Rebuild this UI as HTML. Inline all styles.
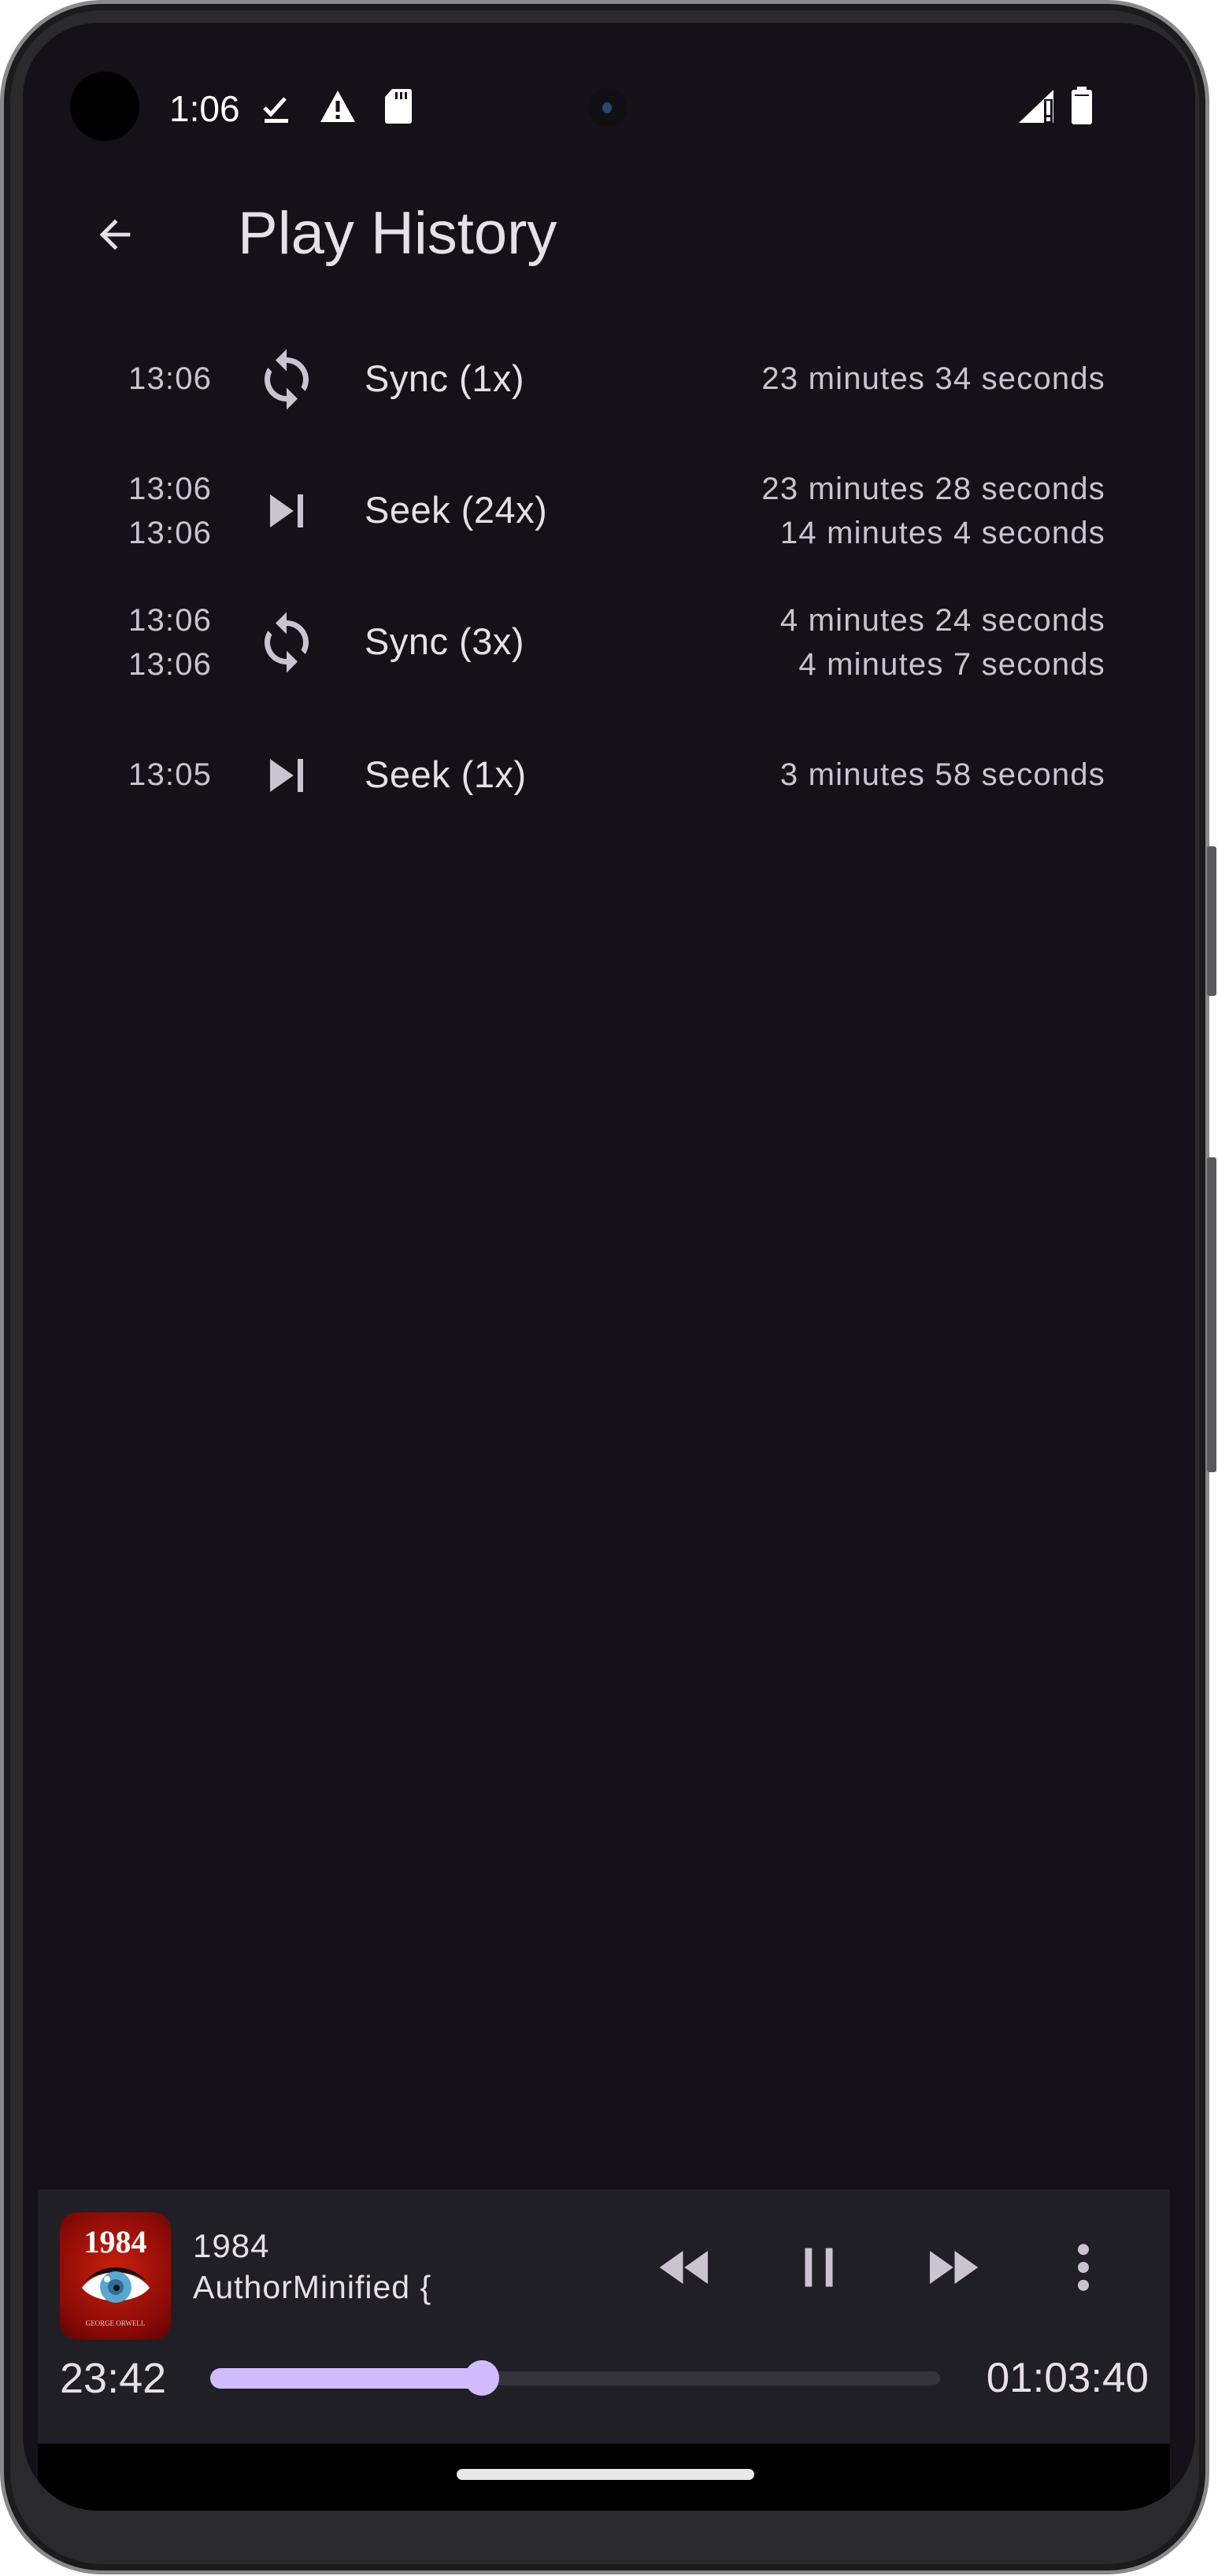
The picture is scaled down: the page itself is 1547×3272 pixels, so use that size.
<!DOCTYPE html>
<html><head><meta charset="utf-8"><style>
*{margin:0;padding:0;box-sizing:border-box}
html,body{width:1547px;height:3272px;background:#fff;overflow:hidden;font-family:"Liberation Sans",sans-serif}
.phone{position:absolute;left:0;top:0;width:1536px;height:3270px;border-radius:130px;background:#2a2a2c;border:5px solid #8a8a8c;box-shadow:inset 0 0 0 8px #1b1b1c}
.btn{position:absolute;left:1533px;width:12px;background:#5a5a5c;border-radius:3px}
.screen{position:absolute;left:29px;top:29px;width:1489px;height:3160px;border-radius:95px;background:#141218;overflow:hidden}
.abs{position:absolute}
.t{color:#cac4d0;font-size:40px;letter-spacing:1.2px;white-space:nowrap}
.lbl{color:#e6e0e9;font-size:47px;letter-spacing:0.5px;white-space:nowrap}
</style></head><body>
<div class="phone"></div>
<div class="btn" style="top:1075px;height:190px"></div>
<div class="btn" style="top:1470px;height:400px"></div>
<div class="screen">
 <div class="abs" style="left:60px;top:62px;width:88px;height:88px;border-radius:50%;background:#000"></div>
 <div class="abs" style="left:186px;top:82px;color:#fff;font-size:46px">1:06</div>
 <svg class="abs" style="left:303px;top:86px" width="40" height="44" viewBox="0 0 40 44"><path d="M4 22l8 8 18-20" stroke="#fff" stroke-width="5" fill="none"/><rect x="4" y="36" width="30" height="5" fill="#fff"/></svg>
 <svg class="abs" style="left:376px;top:84px" width="48" height="44" viewBox="0 0 48 44"><path d="M24 2L46 42H2z" fill="#fff"/><rect x="21.5" y="15" width="5" height="14" fill="#141218"/><rect x="21.5" y="33" width="5" height="5" fill="#141218"/></svg>
 <svg class="abs" style="left:459px;top:82px" width="36" height="48" viewBox="0 0 36 48"><path d="M10 2h22a3 3 0 0 1 3 3v38a3 3 0 0 1-3 3H4a3 3 0 0 1-3-3V12z" fill="#fff"/><rect x="14" y="6" width="3" height="9" fill="#141218"/><rect x="20" y="6" width="3" height="9" fill="#141218"/><rect x="26" y="6" width="3" height="9" fill="#141218"/></svg>
 <div class="abs" style="left:718px;top:83px;width:50px;height:50px;border-radius:50%;background:#101014"></div>
 <div class="abs" style="left:736px;top:101px;width:12px;height:14px;border-radius:50%;background:#2b4870"></div>
 <svg class="abs" style="left:1263px;top:83px" width="50" height="46" viewBox="0 0 50 46"><path d="M46 2V44H2z" fill="#fff"/><rect x="34" y="14" width="11" height="32" fill="#141218"/><rect x="37" y="16" width="5" height="18" fill="#fff"/><rect x="37" y="37" width="5" height="5" fill="#fff"/></svg>
 <svg class="abs" style="left:1330px;top:81px" width="30" height="48" viewBox="0 0 30 48"><rect x="9" y="0" width="12" height="5" fill="#fff"/><rect x="2" y="4" width="26" height="44" rx="3" fill="#fff"/><rect x="6" y="10" width="18" height="2" fill="#141218"/></svg>
 <svg class="abs" style="left:88px;top:240px" width="58" height="58" viewBox="0 0 24 24"><path d="M20 11H7.83l5.59-5.59L12 4l-8 8 8 8 1.41-1.41L7.83 13H20v-2z" fill="#e6e0e9"/></svg>
 <div class="abs" style="left:273px;top:224px;color:#e6e0e9;font-size:76px;white-space:nowrap">Play History</div>

 <div class="abs t" style="left:134px;top:430px">13:06</div>
 <svg class="abs" style="left:293px;top:411px" width="84" height="84" viewBox="0 0 24 24"><path d="M12 4V1L8 5l4 4V6c3.31 0 6 2.690 6 6 0 1.01-.25 1.97-.7 2.8l1.46 1.46C19.54 15.03 20 13.57 20 12c0-4.42-3.58-8-8-8zm0 14c-3.31 0-6-2.69-6-6 0-1.01.25-1.97.7-2.8L5.24 7.74C4.46 8.97 4 10.43 4 12c0 4.42 3.58 8 8 8v3l4-4-4-4v3z" fill="#cac4d0"/></svg>
 <div class="abs lbl" style="left:434px;top:424px">Sync (1x)</div>
 <div class="abs t" style="right:114px;top:430px">23 minutes 34 seconds</div>

 <div class="abs t" style="left:134px;top:570px">13:06</div>
 <div class="abs t" style="left:134px;top:626px">13:06</div>
 <svg class="abs" style="left:293px;top:578px" width="84" height="84" viewBox="0 0 24 24"><path d="M6 18l8.5-6L6 6v12zM16 6v12h2V6h-2z" fill="#cac4d0"/></svg>
 <div class="abs lbl" style="left:434px;top:591px">Seek (24x)</div>
 <div class="abs t" style="right:114px;top:570px">23 minutes 28 seconds</div>
 <div class="abs t" style="right:114px;top:626px">14 minutes 4 seconds</div>

 <div class="abs t" style="left:134px;top:737px">13:06</div>
 <div class="abs t" style="left:134px;top:793px">13:06</div>
 <svg class="abs" style="left:293px;top:745px" width="84" height="84" viewBox="0 0 24 24"><path d="M12 4V1L8 5l4 4V6c3.31 0 6 2.69 6 6 0 1.01-.25 1.97-.7 2.8l1.46 1.46C19.54 15.03 20 13.57 20 12c0-4.42-3.58-8-8-8zm0 14c-3.31 0-6-2.69-6-6 0-1.01.25-1.97.7-2.8L5.24 7.74C4.46 8.97 4 10.43 4 12c0 4.42 3.58 8 8 8v3l4-4-4-4v3z" fill="#cac4d0"/></svg>
 <div class="abs lbl" style="left:434px;top:758px">Sync (3x)</div>
 <div class="abs t" style="right:114px;top:737px">4 minutes 24 seconds</div>
 <div class="abs t" style="right:114px;top:793px">4 minutes 7 seconds</div>

 <div class="abs t" style="left:134px;top:933px">13:05</div>
 <svg class="abs" style="left:293px;top:914px" width="84" height="84" viewBox="0 0 24 24"><path d="M6 18l8.5-6L6 6v12zM16 6v12h2V6h-2z" fill="#cac4d0"/></svg>
 <div class="abs lbl" style="left:434px;top:927px">Seek (1x)</div>
 <div class="abs t" style="right:114px;top:933px">3 minutes 58 seconds</div>

 <div class="abs" style="left:19px;top:2752px;width:1438px;height:323px;background:#211f26"></div>
 <div class="abs" style="left:19px;top:3075px;width:1438px;height:120px;background:#000"></div>
 <div class="abs" style="left:551px;top:3107px;width:378px;height:14px;border-radius:7px;background:#e8e8e8"></div>
 <div class="abs" style="left:47px;top:2781px;width:141px;height:162px;border-radius:22px;background:radial-gradient(circle at 50% 45%,#c8200e,#8a0a06 70%,#5a0404);overflow:hidden">
  <div class="abs" style="left:0;top:14px;width:141px;text-align:center;color:#fff;font-family:'Liberation Serif',serif;font-weight:bold;font-size:40px">1984</div>
  <svg class="abs" style="left:26px;top:66px" width="90" height="52" viewBox="0 0 90 52"><path d="M2 30C20 4 70 4 88 30C70 52 20 52 2 30z" fill="#fff"/><path d="M6 22C25 -2 65 -2 84 22C65 6 25 6 6 22z" fill="#111"/><circle cx="45" cy="29" r="20" fill="#5aa8d0"/><circle cx="45" cy="29" r="10" fill="#2d6f96"/><circle cx="46" cy="30" r="4" fill="#111"/><circle cx="34" cy="19" r="4" fill="#fff"/></svg>
  <div class="abs" style="left:0;top:136px;width:141px;text-align:center;color:#e8c8c0;font-family:'Liberation Serif',serif;font-size:9px">GEORGE ORWELL</div>
 </div>
 <div class="abs" style="left:216px;top:2800px;color:#e6e0e9;font-size:42px;letter-spacing:1px">1984</div>
 <div class="abs" style="left:216px;top:2853px;color:#e6e0e9;font-size:41px;letter-spacing:1px;white-space:nowrap">AuthorMinified {</div>
 <svg class="abs" style="left:800px;top:2809px" width="84" height="84" viewBox="0 0 24 24"><path d="M11 18V6l-8.5 6 8.5 6zm.5-6l8.5 6V6l-8.5 6z" fill="#cac4d0"/></svg>
 <svg class="abs" style="left:969px;top:2809px" width="84" height="84" viewBox="0 0 24 24"><path d="M7 19h2.5V5H7v14zm7.5-14v14H17V5h-2.5z" fill="#cac4d0"/></svg>
 <svg class="abs" style="left:1138px;top:2809px" width="84" height="84" viewBox="0 0 24 24"><path d="M4 18l8.5-6L4 6v12zm9-12v12l8.5-6L13 6z" fill="#cac4d0"/></svg>
 <svg class="abs" style="left:1305px;top:2809px" width="84" height="84" viewBox="0 0 24 24"><circle cx="12" cy="5.5" r="2" fill="#cac4d0"/><circle cx="12" cy="12" r="2" fill="#cac4d0"/><circle cx="12" cy="18.5" r="2" fill="#cac4d0"/></svg>
 <div class="abs" style="left:47px;top:2961px;color:#e6e0e9;font-size:54px">23:42</div>
 <div class="abs" style="right:59px;top:2961px;color:#e6e0e9;font-size:53px">01:03:40</div>
 <div class="abs" style="left:238px;top:2983px;width:927px;height:18px;border-radius:9px;background:#36343b"></div>
 <div class="abs" style="left:238px;top:2979px;width:345px;height:26px;border-radius:13px;background:#d0bcff"></div>
 <div class="abs" style="left:561px;top:2969px;width:44px;height:45px;border-radius:50%;background:#d0bcff"></div>
</div>
</body></html>
